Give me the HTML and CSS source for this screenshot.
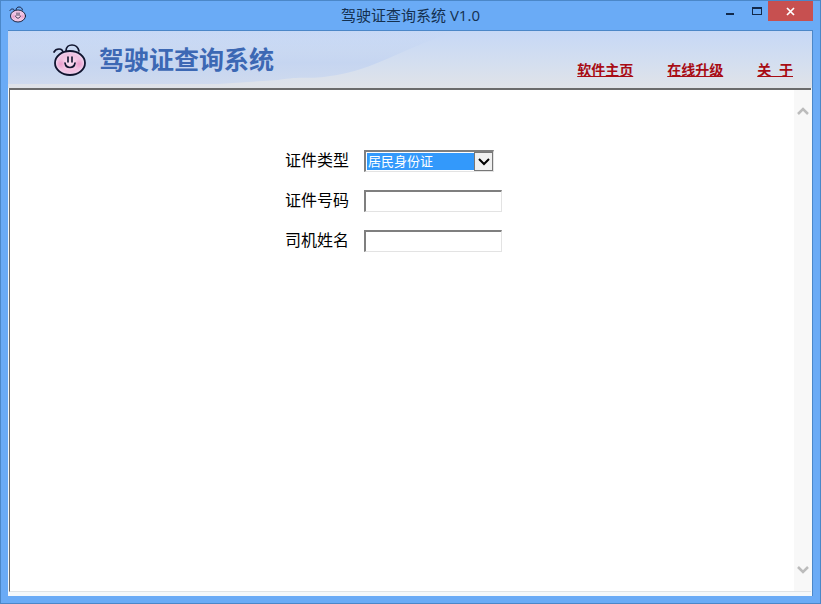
FILE: index.html
```html
<!DOCTYPE html>
<html lang="zh-CN">
<head>
<meta charset="utf-8">
<title>驾驶证查询系统 V1.0</title>
<link rel="stylesheet" href="styles.css">
</head>
<body>
<svg class="defs" aria-hidden="true">
  <defs>
    <radialGradient id="skin">
      <stop offset="0" stop-color="#fbdcf0"/>
      <stop offset="0.7" stop-color="#f0bfe0"/>
      <stop offset="1" stop-color="#eed6f0"/>
    </radialGradient>
    <radialGradient id="cheek">
      <stop offset="0" stop-color="#ea9ccb"/>
      <stop offset="1" stop-color="#ea9ccb" stop-opacity="0"/>
    </radialGradient>
    <linearGradient id="sky" x1="0" x2="0" y1="0" y2="1">
      <stop offset="0" stop-color="#c4d6f4" stop-opacity="0"/>
      <stop offset="0.6" stop-color="#c2d3f1" stop-opacity=".8"/>
      <stop offset="1" stop-color="#cbd8ef" stop-opacity=".8"/>
    </linearGradient>
    <symbol id="face" viewBox="0 0 34 34">
      <g fill="none" stroke="#10142e" stroke-linecap="round">
        <path d="M11 10C11 7 9 6 7 6C4 6 3 7 2 9" stroke-width="1.7"/>
        <path d="M14 8C14 4 17 2 20 2C24 2 26 4 27 8" stroke-width="1.7"/>
        <ellipse cx="18" cy="20" rx="15" ry="12" fill="url(#skin)" stroke-width="1.8"/>
        <circle cx="9" cy="21" r="5" fill="url(#cheek)" stroke="none"/>
        <circle cx="27" cy="21" r="5" fill="url(#cheek)" stroke="none"/>
        <path d="M16 14v5M20 14v5" stroke-width="1.6"/>
        <path d="M13 20C14 26 22 26 23 20" stroke-width="1.6"/>
      </g>
    </symbol>
  </defs>
</svg>
<div class="window">
  <div class="titlebar">
    <svg class="app-icon" aria-hidden="true"><use href="#face"/></svg>
    <div class="caption">驾驶证查询系统 V1.0</div>
    <div class="controls">
      <button class="control" type="button" aria-label="最小化"><svg width="28" height="20"><path d="M10 12h8v2h-8z" fill="#12294a"/></svg></button>
      <button class="control" type="button" aria-label="最大化"><svg width="24" height="20"><path d="M8 6h10v8H8zM9 8v5h8V8z" fill="#12294a" fill-rule="evenodd"/></svg></button>
      <button class="control close" type="button" aria-label="关闭"><svg width="45" height="20"><path d="M19 7l7 7M26 7l-7 7" stroke="#fff" stroke-width="1.7"/></svg></button>
    </div>
  </div>
  <div class="client">
    <header class="banner">
      <svg class="wave" viewBox="0 0 804 57" preserveAspectRatio="none" aria-hidden="true"><path d="M0 0H450C400 15 370 36 334 43S300 44 270 49L210 53L0 53Z" fill="url(#sky)"/></svg>
      <div class="brand">
        <svg class="logo" aria-hidden="true"><use href="#face"/></svg>
        <h1 class="name">驾驶证查询系统</h1>
      </div>
      <nav class="links">
        <a href="#">软件主页</a>
        <a href="#">在线升级</a>
        <a href="#">关&nbsp;&nbsp;于</a>
      </nav>
    </header>
    <div class="view">
      <form class="form">
        <label for="type">证件类型</label>
        <div class="combo">
          <select id="type"><option>居民身份证</option></select>
          <span class="drop"><svg width="14" height="12" aria-hidden="true"><path d="M2 3l5 5 5-5" fill="none" stroke="#000" stroke-width="2"/></svg></span>
        </div>
        <label for="number">证件号码</label>
        <input id="number" type="text">
        <label for="driver">司机姓名</label>
        <input id="driver" type="text">
      </form>
      <div class="scroll">
        <svg width="12" height="10" aria-hidden="true"><path d="M1 8l5-5 5 5" fill="none" stroke="#bcbcbc" stroke-width="2.5"/></svg>
        <svg width="12" height="10" aria-hidden="true"><path d="M1 2l5 5 5-5" fill="none" stroke="#bcbcbc" stroke-width="2.5"/></svg>
      </div>
    </div>
  </div>
</div>
</body>
</html>
```
FILE: styles.css
```css
* { box-sizing: border-box; }

body {
  margin: 0;
  font-family: "Liberation Sans", "Noto Sans CJK SC", sans-serif;
  color: #000;
}

.defs { position: absolute; width: 0; height: 0; }

.window {
  display: flex;
  flex-direction: column;
  min-height: 100vh;
  padding: 0 7px 7px;
  background: #6aabf6;
  border: 1px solid #4b87c8;
}

.titlebar {
  display: grid;
  grid-template-columns: 1fr auto 1fr;
  height: 29px;
}

.app-icon { width: 17px; height: 17px; margin: 5px 0 0 1px; }

.caption {
  padding-top: 3px;
  font-family: "Open Sans", "Noto Sans CJK SC", sans-serif;
  font-size: 15px;
  line-height: 22px;
  color: #14304f;
}

.controls { display: flex; justify-content: flex-end; }

.control {
  height: 20px;
  padding: 0;
  border: 0;
  background: none;
}

.control svg { display: block; }
.close { background: #c75050; }

.client {
  flex: 1;
  display: flex;
  flex-direction: column;
  padding-bottom: 4px;
  background: #f4f8fb;
  border: 1px solid #4b87c8;
  border-width: 1px 1px 0 0;
}

.banner {
  position: relative;
  display: flex;
  justify-content: space-between;
  height: 57px;
  padding: 0 19px 0 44px;
  background: linear-gradient(#c6d8f6, #d5dfef 60%, #e0e3e8);
}

.wave { position: absolute; inset: 0; width: 100%; height: 100%; }

.brand { position: relative; display: flex; align-items: center; gap: 13px; }
.logo { width: 34px; height: 36px; }

.name {
  margin: 0;
  font-size: 25px;
  line-height: 36px;
  font-weight: 700;
  color: #3c68b4;
}

.links {
  position: relative;
  display: flex;
  gap: 34px;
  padding-top: 29px;
  font-size: 14px;
  line-height: 20px;
  font-weight: 700;
}

.links a { color: #a80c14; }

.view {
  flex: 1;
  display: flex;
  margin: 0 1px;
  background: #fff;
  border: solid #6b6b6b;
  border-width: 2px 0 1px 1px;
  border-bottom-color: #dfe3e6;
}

.form {
  flex: 1;
  display: grid;
  grid-template-columns: auto auto;
  grid-auto-rows: 22px;
  justify-content: center;
  align-content: start;
  align-items: center;
  gap: 18px 15px;
  padding: 60px 17px 0 0;
  font-size: 16px;
  line-height: 22px;
}

.form input {
  width: 138px;
  height: 22px;
  border: 1px solid #e3e3e3;
  border-top: 2px solid #7f7f7f;
  border-left: 2px solid #7f7f7f;
  background: #fff;
}

.combo { position: relative; width: 130px; height: 22px; }

.combo select {
  appearance: none;
  display: block;
  width: 100%;
  height: 22px;
  padding: 0 20px 0 2px;
  border: 1px solid #e3e3e3;
  border-top: 2px solid #7f7f7f;
  border-left: 2px solid #7f7f7f;
  border-radius: 0;
  background: #3399fb;
  box-shadow: inset 0 0 0 1px #fff;
  font: 13px/18px "Liberation Sans", "Noto Sans CJK SC", sans-serif;
  color: #fff;
}

.drop {
  position: absolute;
  top: 2px;
  right: 1px;
  display: grid;
  place-items: center;
  width: 19px;
  height: 19px;
  border: 1px solid #777;
  background: #f0f0f0;
  pointer-events: none;
}

.scroll {
  display: flex;
  flex-direction: column;
  justify-content: space-between;
  align-items: center;
  width: 17px;
  padding: 16px 0;
  background: #f8f8f8;
}
```
